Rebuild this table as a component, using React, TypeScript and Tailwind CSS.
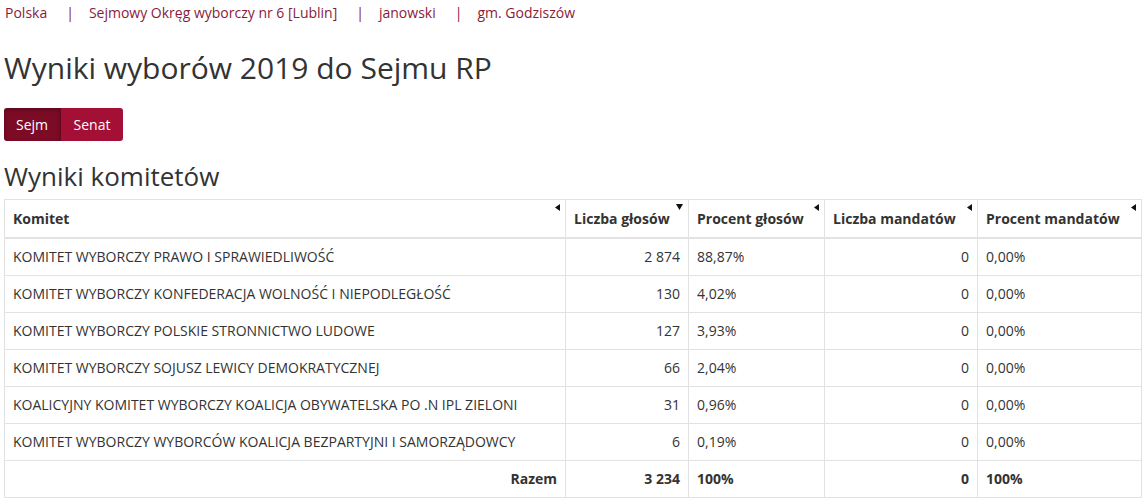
import React from 'react';

interface Row {
  name: string;
  votes: string;
  pct: string;
  seats: string;
  seatsPct: string;
}

const rows: Row[] = [
  { name: 'KOMITET WYBORCZY PRAWO I SPRAWIEDLIWOŚĆ', votes: '2 874', pct: '88,87%', seats: '0', seatsPct: '0,00%' },
  { name: 'KOMITET WYBORCZY KONFEDERACJA WOLNOŚĆ I NIEPODLEGŁOŚĆ', votes: '130', pct: '4,02%', seats: '0', seatsPct: '0,00%' },
  { name: 'KOMITET WYBORCZY POLSKIE STRONNICTWO LUDOWE', votes: '127', pct: '3,93%', seats: '0', seatsPct: '0,00%' },
  { name: 'KOMITET WYBORCZY SOJUSZ LEWICY DEMOKRATYCZNEJ', votes: '66', pct: '2,04%', seats: '0', seatsPct: '0,00%' },
  { name: 'KOALICYJNY KOMITET WYBORCZY KOALICJA OBYWATELSKA PO .N IPL ZIELONI', votes: '31', pct: '0,96%', seats: '0', seatsPct: '0,00%' },
  { name: 'KOMITET WYBORCZY WYBORCÓW KOALICJA BEZPARTYJNI I SAMORZĄDOWCY', votes: '6', pct: '0,19%', seats: '0', seatsPct: '0,00%' },
];

const crumbs = ['Polska', 'Sejmowy Okręg wyborczy nr 6 [Lublin]', 'janowski', 'gm. Godziszów'];

const SortArrow: React.FC<{ down?: boolean }> = ({ down }) => (
  <span className="absolute right-[5px] top-[4px] text-[#111]">
    {down ? (
      <svg width="7" height="6" viewBox="0 0 7 6"><path d="M0 0h7L3.5 6z" fill="currentColor" /></svg>
    ) : (
      <svg width="5" height="7" viewBox="0 0 5 7"><path d="M5 0v7L0 3.5z" fill="currentColor" /></svg>
    )}
  </span>
);

const App: React.FC = () => {
  const th = 'relative border border-[#e2e2e2] border-b-2 border-b-[#e2e2e2] px-[8px] pt-[8px] pb-[8px] text-left font-bold';
  const td = 'border border-[#e2e2e2] px-[8px] h-[37px]';

  return (
    <div className="px-[4px] text-[#333] font-['Open_Sans',sans-serif]">
      {/* Breadcrumb */}
      <div className="flex items-center pt-[1px] h-[24px] text-[14px] text-[#8b1a3b]">
        {crumbs.map((c, i) => (
          <React.Fragment key={c}>
            {i > 0 && <span className="pl-[19px] pr-[14px] text-[#8b1a3b]">|</span>}
            <a className="pl-[1px]" href="#">{c}</a>
          </React.Fragment>
        ))}
      </div>

      <h1 className="mt-[24px] text-[30px] leading-[40px] font-normal">Wyniki wyborów 2019 do Sejmu RP</h1>

      {/* Tabs */}
      <div className="mt-[20px] flex">
        <button className="h-[33px] w-[57px] rounded-l-[3px] bg-[#7c0b26] text-white text-[14px] font-medium border-r border-[#650820] shadow-[inset_0_2px_4px_rgba(0,0,0,0.25)]">Sejm</button>
        <button className="h-[33px] w-[62px] rounded-r-[3px] bg-[#a30f35] text-white text-[14px] font-medium">Senat</button>
      </div>

      <h2 className="mt-[18px] text-[26px] leading-[34px] font-normal">Wyniki komitetów</h2>

      <table className="mt-[6px] w-[1138px] border-collapse text-[14px]">
        <thead>
          <tr>
            <th className={`${th} w-[561px]`}>Komitet<SortArrow /></th>
            <th className={`${th} w-[123px]`}>Liczba głosów<SortArrow down /></th>
            <th className={`${th} w-[136px]`}>Procent głosów<SortArrow /></th>
            <th className={`${th} w-[153px]`}>Liczba mandatów<SortArrow /></th>
            <th className={th}>Procent mandatów<SortArrow /></th>
          </tr>
        </thead>
        <tbody>
          {rows.map((r) => (
            <tr key={r.name}>
              <td className={td}>{r.name}</td>
              <td className={`${td} text-right`}>{r.votes}</td>
              <td className={td}>{r.pct}</td>
              <td className={`${td} text-right`}>{r.seats}</td>
              <td className={td}>{r.seatsPct}</td>
            </tr>
          ))}
          <tr className="font-bold">
            <td className={`${td} text-right`}>Razem</td>
            <td className={`${td} text-right`}>3 234</td>
            <td className={td}>100%</td>
            <td className={`${td} text-right`}>0</td>
            <td className={td}>100%</td>
          </tr>
        </tbody>
      </table>
    </div>
  );
};

export default App;
